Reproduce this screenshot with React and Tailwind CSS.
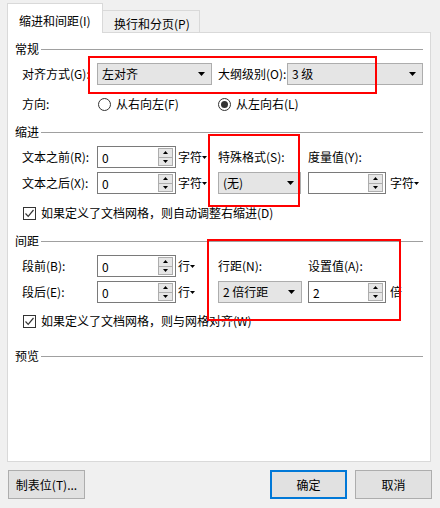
import React from "react";

function Tri({ w = 7, h = 4, up = false }) {
  const pts = up ? `0,${h} ${w},${h} ${w / 2},0` : `0,0 ${w},0 ${w / 2},${h}`;
  return (
    <svg width={w} height={h} viewBox={`0 0 ${w} ${h}`} className="block shrink-0">
      <polygon points={pts} fill="#000" />
    </svg>
  );
}

function Header({ children }) {
  return (
    <div className="flex h-4 items-center">
      <span className="leading-4">{children}</span>
      <div className="ml-[2px] h-px flex-1 bg-[#a0a0a0]" />
    </div>
  );
}

function Dropdown({ value, w }) {
  return (
    <div className={`flex h-[22px] items-center justify-between border border-[#adadad] bg-[#e5e5e5] pl-[4px] pr-[6px] ${w}`}>
      <span className="leading-4">{value}</span>
      <Tri />
    </div>
  );
}

function Spin({ value, w }) {
  return (
    <div className={`flex h-[22px] border border-[#7a7a7a] bg-white py-[1px] pr-[2px] ${w}`}>
      <span className="flex-1 pl-[4px] leading-[20px]">{value}</span>
      <div className="flex w-[15px] flex-col border border-[#adadad] bg-[#e6e6e6]">
        <div className="flex flex-1 items-center justify-center border-b border-[#adadad]">
          <Tri w={5} h={3} up />
        </div>
        <div className="flex flex-1 items-center justify-center">
          <Tri w={5} h={3} />
        </div>
      </div>
    </div>
  );
}

function Unit({ text, cls }) {
  return (
    <div className={`flex items-center ${cls}`}>
      <span className="leading-4">{text}</span>
      <Tri w={5} h={3} />
    </div>
  );
}

function Radio({ checked }) {
  return (
    <div className="flex h-[13px] w-[13px] shrink-0 items-center justify-center rounded-full border border-[#333] bg-white">
      {checked && <div className="h-[7px] w-[7px] rounded-full bg-[#333]" />}
    </div>
  );
}

function Check({ text }) {
  return (
    <div className="ml-[8px] flex h-4 items-center">
      <div className="flex h-[13px] w-[13px] shrink-0 items-center justify-center border border-[#333] bg-white">
        <svg width="11" height="11" viewBox="0 0 11 11" className="block">
          <polyline points="1.5,5.5 4.2,8.3 9.5,2" fill="none" stroke="#333" strokeWidth="1.2" />
        </svg>
      </div>
      <span className="ml-[5px] leading-4">{text}</span>
    </div>
  );
}

export default function App() {
  return (
    <div className="relative h-[508px] w-[440px] overflow-hidden bg-[#f0f0f0] pt-[3px] font-['Noto_Sans_CJK_SC','Noto_Sans',sans-serif] text-[12px] text-black">
      {/* tabs */}
      <div className="ml-[7px] flex h-[29px] items-end">
        <div className="relative z-10 -mb-px h-[30px] w-[96px] border-l border-r border-t border-[#d9d9d9] bg-white pl-[11px] pt-[8px]">
          <span className="leading-4">缩进和间距(I)</span>
        </div>
        <div className="h-[22px] w-[97px] border-r border-t border-[#d9d9d9] bg-[#f0f0f0] pl-[11px] pt-[4px]">
          <span className="leading-4">换行和分页(P)</span>
        </div>
      </div>

      {/* panel */}
      <div className="ml-[7px] flex h-[430px] w-[424px] flex-col border border-[#d9d9d9] bg-white px-[7px]">
        <div className="mt-[8px]">
          <Header>常规</Header>
        </div>
        <div className="ml-[7px] mt-[6px] flex h-[22px] items-center">
          <span className="w-[75px] leading-4">对齐方式(G):</span>
          <Dropdown value="左对齐" w="w-[115px]" />
          <span className="ml-[6px] w-[69px] leading-4">大纲级别(O):</span>
          <div className="flex-1">
            <Dropdown value="3 级" w="w-full" />
          </div>
        </div>
        <div className="ml-[7px] mt-[11px] flex h-4 items-center">
          <span className="w-[75px] leading-4">方向:</span>
          <div className="flex w-[121px] items-center pl-[1px]">
            <Radio />
            <span className="ml-[5px] leading-4">从右向左(F)</span>
          </div>
          <div className="flex items-center">
            <Radio checked />
            <span className="ml-[5px] leading-4">从左向右(L)</span>
          </div>
        </div>

        <div className="mt-[12px]">
          <Header>缩进</Header>
        </div>
        <div className="ml-[7px] mt-[6px] flex h-[22px] items-center">
          <span className="w-[75px] leading-4">文本之前(R):</span>
          <Spin value="0" w="w-[79px]" />
          <Unit text="字符" cls="ml-[2px] w-[40px]" />
          <span className="w-[90px] leading-4">特殊格式(S):</span>
          <span className="leading-4">度量值(Y):</span>
        </div>
        <div className="ml-[7px] mt-[4px] flex h-[22px] items-center">
          <span className="w-[75px] leading-4">文本之后(X):</span>
          <Spin value="0" w="w-[79px]" />
          <Unit text="字符" cls="ml-[2px] w-[40px]" />
          <Dropdown value="(无)" w="w-[83px]" />
          <div className="ml-[7px]">
            <Spin value="" w="w-[78px]" />
          </div>
          <Unit text="字符" cls="ml-[4px]" />
        </div>
        <div className="mt-[11px]">
          <Check text="如果定义了文档网格，则自动调整右缩进(D)" />
        </div>

        <div className="mt-[12px]">
          <Header>间距</Header>
        </div>
        <div className="ml-[7px] mt-[6px] flex h-[22px] items-center">
          <span className="w-[75px] leading-4">段前(B):</span>
          <Spin value="0" w="w-[79px]" />
          <Unit text="行" cls="ml-[2px] w-[40px]" />
          <span className="w-[90px] leading-4">行距(N):</span>
          <span className="leading-4">设置值(A):</span>
        </div>
        <div className="ml-[7px] mt-[4px] flex h-[22px] items-center">
          <span className="w-[75px] leading-4">段后(E):</span>
          <Spin value="0" w="w-[79px]" />
          <Unit text="行" cls="ml-[2px] w-[40px]" />
          <Dropdown value="2 倍行距" w="w-[84px]" />
          <div className="ml-[6px]">
            <Spin value="2" w="w-[78px]" />
          </div>
          <span className="ml-[4px] leading-4">倍</span>
        </div>
        <div className="mt-[10px]">
          <Check text="如果定义了文档网格，则与网格对齐(W)" />
        </div>

        <div className="mt-[19px]">
          <Header>预览</Header>
        </div>
      </div>

      {/* buttons */}
      <div className="mt-[8px] flex items-center justify-between px-[8px]">
        <button className="flex h-[29px] w-[77px] items-center justify-center border border-[#adadad] bg-[#e1e1e1]">
          制表位(T)...
        </button>
        <div className="flex gap-[8px]">
          <button className="flex h-[29px] w-[77px] items-center justify-center border-2 border-[#0078d7] bg-[#e1e1e1]">
            确定
          </button>
          <button className="flex h-[29px] w-[77px] items-center justify-center border border-[#adadad] bg-[#e1e1e1]">
            取消
          </button>
        </div>
      </div>

      {/* red annotation boxes */}
      <div className="pointer-events-none absolute left-[88px] top-[56px] h-[38px] w-[289px] border-2 border-[#ff0000]" />
      <div className="pointer-events-none absolute left-[208px] top-[134px] h-[73px] w-[92px] border-2 border-[#ff0000]" />
      <div className="pointer-events-none absolute left-[207px] top-[239px] h-[82px] w-[194px] border-2 border-[#ff0000]" />
    </div>
  );
}
